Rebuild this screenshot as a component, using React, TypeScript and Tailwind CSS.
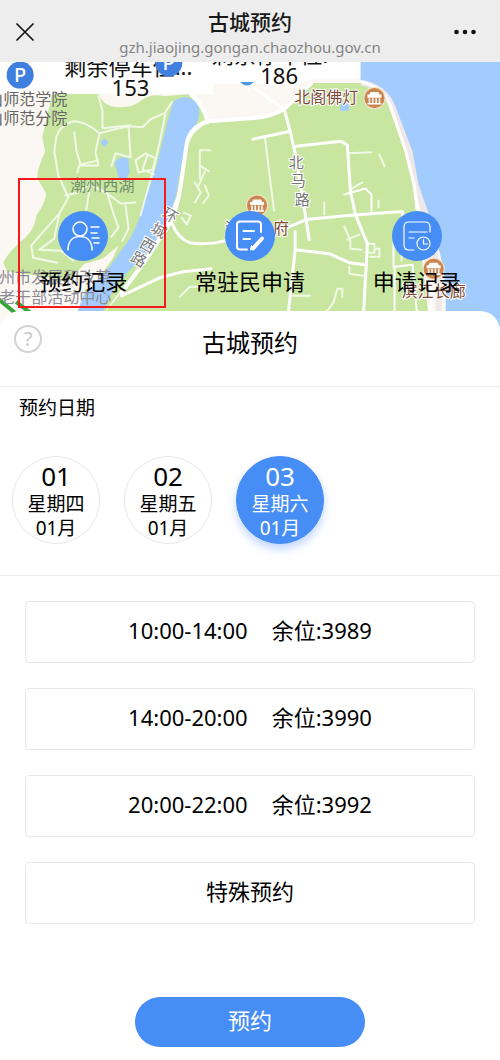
import { useState } from "react";
import type { ReactNode } from "react";

interface DateOption {
  day: string;
  week: string;
  month: string;
}

const dates: DateOption[] = [
  { day: "01", week: "星期四", month: "01月" },
  { day: "02", week: "星期五", month: "01月" },
  { day: "03", week: "星期六", month: "01月" },
];

const slots = [
  { time: "10:00-14:00", left: 3989 },
  { time: "14:00-20:00", left: 3990 },
  { time: "20:00-22:00", left: 3992 },
];

function Landmark({ x, y }: { x: number; y: number }) {
  return (
    <g transform={`translate(${x} ${y})`}>
      <circle r="11" fill="#f7e3c8" />
      <circle r="10" fill="#c98650" />
      <path d="M-4 -6h8l1 2.500h2v3h-14v-3h2z" fill="#fff" />
      <path d="M-5 0v5M-1.700 0v5M1.700 0v5M5 0v5M-7 5.500h14" stroke="#fff" strokeWidth="1.500" fill="none" />
    </g>
  );
}

function ParkingPin({ x, y }: { x: number; y: number }) {
  return (
    <g transform={`translate(${x} ${y})`}>
      <circle r="13.500" fill="#3f7fe0" />
      <text y="7" textAnchor="middle" fontSize="20" fontWeight="500" fill="#fff">
        P
      </text>
    </g>
  );
}

function CityMap() {
  return (
    <svg
      className="absolute inset-0 h-full w-full"
      viewBox="0 62 500 270"
      preserveAspectRatio="xMidYMid slice"
      aria-hidden="true"
    >
      <rect y="62" width="500" height="270" fill="#fbf7f2" />

      {/* parks */}
      <g fill="#c8e6a0">
        <path d="M53 94H99Q104 106 116 107Q133 108 142 100Q152 93 164 96L190 94Q204 106 207 121L190 133L180 190L150 255L117 295L90 332H30L22 300L4 262Q10 250 26 237Q36 228 37 215Q45 205 47 193L38 178Q38 168 46 151L43 137Z" />
        <path d="M208 123L250 119Q270 117 283 109L311 83H362Q383 90 388 105L404 151L412 185L417 225L430 332H88L117 298L172 222L187 150Q190 132 208 123Z" />
      </g>
      <path d="M85 263L103 258L119 245L113 258L92 288L60 290Z" fill="#fbf7f2" />
      <path d="M0 270L40 275L86 285L78 332H0Z" fill="#fbf7f2" />

      {/* water */}
      <g fill="#a2ccfe">
        <path d="M360 62H500V332H445V290Q443 258 431 226L417 184L408 150L397 115Q391 94 376 86L360 80Z" />
        <path d="M174 101Q188 92 198 104Q203 120 190 132L184 152L178 185Q174 215 151 248L117 283L93 332H70L84 295L110 266L131 237Q141 218 145 200L157 165L168 120Z" />
        <path d="M101 142l4-4 4 4-4 5zM115 162l6-5 8 1 1 14-4 9-7-4zM340 101h8l1 9-9 1z" />
      </g>

      {/* main roads */}
      <g fill="none" stroke="#fff" strokeLinecap="round" strokeLinejoin="round">
        <path d="M363 83Q385 88 392 107L409 152L415 185L429 225L438 275V332" stroke="#f0e8e8" strokeWidth="6" />
        <g strokeWidth="3">
          <path d="M191 94Q204 105 208 122M250 118Q270 117 284 109L311 83M250 118L208 121Q190 127 187 143L181 185Q177 211 169 224L149 255L122 292" strokeWidth="4" />
          <path d="M362 82Q382 88 389 103L405 150L414 186L419 226L430 270V332" />
          <path d="M253 87L284 109L290 131L296 157L309 239" />
          <path d="M172 222Q178 238 190 242Q208 245 226 240L280 230L306 219L348 215L402 211L403 230" />
          <path d="M296 146L341 141L347 145L350 190L355 214L367 243L362 332" />
          <path d="M295 231V249L286 332M295 249L329 253L349 262L365 264M253 139L290 131" />
          <path d="M344 194L365 188L371 194V211M394 332V266L412 264L418 332M393 240V266" strokeWidth="2" />
          <path d="M122 295L160 277L183 271L211 268" />
        </g>
        {/* footpaths */}
        <g strokeWidth="2" opacity="0.75">
          <path d="M99 96L103 110V128L131 125M100 133Q87 121 74 121Q61 124 57 137L55 151L59 175L69 197L60 213L45 230L32 245L34 257L58 262" />
          <path d="M100 133L116 129L129 126L143 127L151 119L165 113L172 102M129 126L131 157L116 153L112 166M100 133L96 152L99 165L80 165L78 172M75 132L77 150L81 164L99 160M166 112L160 142L153 172L145 200L141 215" />
          <path d="M136 160l10-7 10 5-3 11-14 3zM148 154l-5 15 11 5M66 195L79 192L90 184L108 193L121 203L136 202M91 183L87 209M108 193L113 210L119 227L112 236M60 213L55 238L40 249L62 250L74 260M126 205L129 228L123 240" />
          <path d="M210 150h-10v28M200 165l9 6M205 171l-6 14M195 182l6 10-6 10M205 185l4 10-6 8M184 212l7 3-4 9-5-7" />
          <path d="M265 138L270 179L274 210M348 153L371 152M379 154l5 12M324 202v12M344 226L350 240V248L361 249M347 239L359 234M367 243h7v9h-8M374 248h5v8h-10M349 266v7l14 2M324 314L333 302L337 288h5v8M180 296l10-10h12M293 295h17M378 200v7M352 188l10-6" />
          <path d="M401 260V245" />
        </g>
      </g>
      <path d="M-2 297L22 317M17 301L35 315" fill="none" stroke="#37a637" strokeWidth="4" />

      {/* parking info windows */}
      <path d="M0 62H360V79H311L298 84H213V94H0Z" fill="#fff" />
      <path d="M240 82h14q-7 7-14 0z" fill="#4a9be8" />
      <ParkingPin x={21} y={75} />
      <g fontSize="22" fill="#111">
        <text x="65" y="75">
          剩余停车位...
        </text>
        <text x="131" y="96" textAnchor="middle">
          153
        </text>
        <text x="212" y="63">
          剩余停车位:
        </text>
        <text x="279" y="84" textAnchor="middle">
          186
        </text>
      </g>
      <ParkingPin x={169} y={63} />

      {/* place names */}
      <g fontSize="16" fill="#666" textAnchor="end">
        <text x="68" y="105">
          山师范学院
        </text>
        <text x="68" y="124">
          山师范分院
        </text>
      </g>
      <g fontSize="16" fill="#8b8c98">
        <text x="0" y="282">
          州市发展和改革
        </text>
        <text x="0" y="302">
          老干部活动中心
        </text>
      </g>
      <text x="71" y="191" fontSize="16" fill="#6f9069">
        潮州西湖
      </text>
      <g fontSize="15" fill="#777" stroke="#fff" strokeWidth="2" paintOrder="stroke" textAnchor="middle">
        <text transform="translate(170 215) rotate(30)" y="5">
          环
        </text>
        <text transform="translate(159 230) rotate(30)" y="5">
          城
        </text>
        <text transform="translate(148 245) rotate(30)" y="5">
          西
        </text>
        <text transform="translate(139 259) rotate(30)" y="5">
          路
        </text>
        <text x="296" y="168">
          北
        </text>
        <text x="298" y="186">
          马
        </text>
        <text x="302" y="204">
          路
        </text>
      </g>
      <g fontSize="16" fill="#804c38" stroke="#fff" strokeWidth="2" paintOrder="stroke">
        <text x="294" y="103">
          北阁佛灯
        </text>
        <text x="225" y="233">
          潮
        </text>
        <text x="273" y="233">
          府
        </text>
        <text x="401" y="296">
          滨江长廊
        </text>
      </g>
      <Landmark x={374} y={98} />
      <Landmark x={257} y={205} />
      <Landmark x={433} y={268} />
    </svg>
  );
}

function RecordIcon() {
  return (
    <svg viewBox="0 0 50 50" className="size-full" fill="none" stroke="#fff" strokeWidth="1.500" strokeLinecap="round">
      <circle cx="22" cy="18" r="7" />
      <path d="M10 39C10 30 15 25.500 22 25.500S34 30 34 39M33 16h8M33 22h6M34 27h7M36 32h5" />
    </svg>
  );
}

function ApplyIcon() {
  return (
    <svg viewBox="0 0 50 50" className="size-full" fill="none" stroke="#fff" strokeLinecap="round" strokeLinejoin="round">
      <path d="M36 21V13.500Q36 10.500 33 10.500H15Q12 10.500 12 13.500V35.500Q12 38.500 15 38.500H22" strokeWidth="2" />
      <path d="M18.500 20H29M18.500 28H25" strokeWidth="2" />
      <path d="M37 27.500L28 37.500" strokeWidth="4" />
      <path d="M25.500 38.500l1-4 3 3z" fill="#fff" strokeWidth="1" />
    </svg>
  );
}

function HistoryIcon() {
  return (
    <svg viewBox="0 0 50 50" className="size-full" fill="none" stroke="#fff" strokeWidth="1.200" strokeLinecap="round" strokeLinejoin="round">
      <path d="M38 21V16Q38 11 33 11H17Q12 11 12 16V34Q12 39 17 39H22M17 21H35M17 27H22" />
      <circle cx="31.500" cy="32.500" r="6.500" />
      <path d="M31.500 28.500V33H35.500" />
    </svg>
  );
}

const actions: { label: string; icon: ReactNode }[] = [
  { label: "预约记录", icon: <RecordIcon /> },
  { label: "常驻民申请", icon: <ApplyIcon /> },
  { label: "申请记录", icon: <HistoryIcon /> },
];

export default function App() {
  const [selected, setSelected] = useState("03");

  return (
    <div className="min-h-screen bg-white font-['Noto_Sans','Noto_Sans_CJK_SC',sans-serif] text-black">
      {/* Title bar */}
      <header className="flex items-center justify-between bg-[#ededed] px-4 pt-2 pb-1">
        <button aria-label="关闭" className="size-8">
          <svg viewBox="0 0 32 32" className="size-full" stroke="#111" strokeWidth="1.700" strokeLinecap="round">
            <path d="M1 7L17 23M17 7L1 23" />
          </svg>
        </button>
        <div className="text-center">
          <h1 className="text-[21px] leading-7 font-medium text-[#181818]">古城预约</h1>
          <p className="text-[15px] leading-[22px] text-[#858585]">gzh.jiaojing.gongan.chaozhou.gov.cn</p>
        </div>
        <button aria-label="更多" className="size-8">
          <svg viewBox="0 0 32 32" className="size-full" fill="#111">
            <circle cx="4.500" cy="15" r="2.300" />
            <circle cx="13" cy="15" r="2.300" />
            <circle cx="21.500" cy="15" r="2.300" />
          </svg>
        </button>
      </header>

      {/* Map */}
      <section className="relative overflow-hidden pt-[149px] pb-9">
        <CityMap />
        <nav className="relative grid grid-cols-3">
          {actions.map((action) => (
            <button key={action.label} className="flex flex-col items-center gap-1">
              <span className="size-[50px] rounded-full bg-[#478df6]">{action.icon}</span>
              <span className="text-[22px] leading-8">{action.label}</span>
            </button>
          ))}
        </nav>
        <div className="pointer-events-none absolute top-[116px] left-[18px] h-[130px] w-[148px] border-2 border-[#f5191b]" />
      </section>

      {/* Booking panel */}
      <main className="relative -mt-[22px] rounded-t-[20px] bg-white">
        <div className="flex items-start border-b border-[#eeeeee] px-3.5 pt-3.5 pb-[25px]">
          <button
            aria-label="帮助"
            className="size-7 rounded-full border-2 border-[#d2d2d2] text-[20px] leading-6 text-[#c8c8c8]"
          >
            ?
          </button>
          <h2 className="flex-1 pr-7 text-center text-[24px] leading-9">古城预约</h2>
        </div>

        <section className="border-b border-[#eeeeee] pb-[31px]">
          <h3 className="px-[19px] pt-[7px] text-[19px] leading-7">预约日期</h3>
          <div className="mt-[34px] flex gap-6 px-3">
            {dates.map((date) => (
              <button
                key={date.day}
                onClick={() => setSelected(date.day)}
                aria-pressed={selected === date.day}
                className={`flex size-[88px] flex-col items-center justify-center rounded-full border ${
                  selected === date.day
                    ? "border-[#478df6] bg-[#478df6] text-white shadow-[0_5px_10px_#478df659]"
                    : "border-[#e8e8e8] bg-white"
                }`}
              >
                <span className="text-[26px] leading-7">{date.day}</span>
                <span className="text-[19px] leading-7">{date.week}</span>
                <span className="text-[19px] leading-5">{date.month}</span>
              </button>
            ))}
          </div>
        </section>

        <section className="flex flex-col gap-[25px] px-[25px] pt-[25px] text-[22px]">
          {slots.map((slot) => (
            <button
              key={slot.time}
              className="flex h-[62px] items-center justify-center gap-6 rounded border border-[#e8e8e8] pb-1"
            >
              <span>{slot.time}</span>
              <span>余位:{slot.left}</span>
            </button>
          ))}
          <button className="h-[62px] rounded border border-[#e8e8e8] pb-1">特殊预约</button>
        </section>

        <div className="flex justify-center pt-[73px] pb-3">
          <button className="h-[50px] w-[46%] rounded-full bg-[#478df6] pb-1 text-[22px] text-white">预约</button>
        </div>
      </main>
    </div>
  );
}
